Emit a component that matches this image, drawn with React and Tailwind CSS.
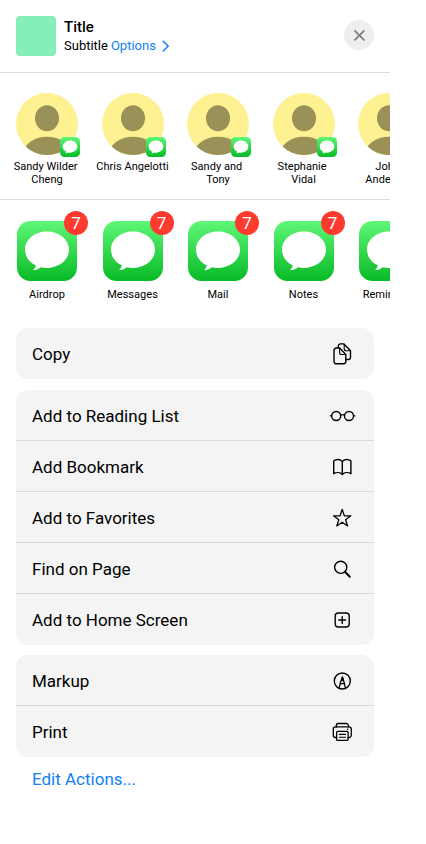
import React from "react";

const people = ["Sandy Wilder \nCheng", "Chris Angelotti", "Sandy and \nTony", "Stephanie \nVidal", "John \nAnderson"];
const apps = ["Airdrop", "Messages", "Mail", "Notes", "Reminders"];

function MessagesIcon({ className, id }) {
  return (
    <svg viewBox="0 0 60 60" className={className} aria-hidden="true">
      <defs>
        <linearGradient id={id} x1="0" y1="0" x2="0" y2="1">
          <stop offset="0" stopColor="#5ff777" />
          <stop offset="1" stopColor="#08ba26" />
        </linearGradient>
      </defs>
      <rect width="60" height="60" rx="13.5" fill={`url(#${id})`} />
      <path
        d="M30 10.4c12.2 0 22 8.1 22 18.2s-9.8 18.3-22 18.3c-2.2 0-4.300-.2-6.200-.7-2.200 1.900-4.900 3-7.900 3.100 1.500-1.300 2.600-3 2.800-5C12 41.200 8 35.300 8 28.600c0-10.100 9.800-18.200 22-18.200z"
        fill="#fff"
      />
    </svg>
  );
}

function Glyph({ children, width = 1.4 }) {
  return (
    <svg
      viewBox="0 0 28 27"
      className="h-[27px] w-7 shrink-0"
      fill="none"
      stroke="#000"
      strokeWidth={width}
      strokeLinecap="round"
      strokeLinejoin="round"
      aria-hidden="true"
    >
      {children}
    </svg>
  );
}

const icons = {
  copy: (
    <Glyph>
      <path d="M10.300 7.700V6.100a2.200 2.200 0 0 1 2.200-2.200h3.400l6.600 6.800v6.600a2.200 2.200 0 0 1-2.200 2.200h-2" />
      <path d="M16.200 4.200v4.500a2 2 0 0 0 2 2h4.200" strokeWidth="1.100" />
      <path d="M11.600 8H8.200A2.200 2.200 0 0 0 6 10.200v11.400a2.200 2.200 0 0 0 2.200 2.200h7.400a2.200 2.200 0 0 0 2.200-2.200v-7.100z" />
      <path d="M11.600 8.200v4.300a2 2 0 0 0 2 2h4" strokeWidth="1.100" />
    </Glyph>
  ),
  glasses: (
    <Glyph>
      <circle cx="8.200" cy="14" r="4.500" />
      <circle cx="21" cy="14" r="4.500" />
      <path d="M12.600 13.200q2-1.100 4 0M3.600 13.600l-1.200.300M25.600 13.600l1.200.300" />
    </Glyph>
  ),
  book: (
    <Glyph>
      <path d="M14.300 8.600C12.600 6 8 5.900 5.700 8.100v12.600c2.700-1.600 6.500-1.400 8.600.7 2.100-2.100 5.900-2.300 8.600-.7V8.100C20.600 5.900 16 6 14.300 8.600zM14.300 8.600v12.800" />
    </Glyph>
  ),
  star: (
    <Glyph>
      <path d="M14.200 5.400l2.100 6.400h6.600l-5.300 4 2 6.200-5.400-3.800L8.800 22l2-6.200-5.300-4h6.600z" strokeWidth="1.300" />
    </Glyph>
  ),
  search: (
    <Glyph>
      <circle cx="12.700" cy="12.300" r="6.100" />
      <path d="M17.200 17l4.600 4.700" strokeWidth="2" />
    </Glyph>
  ),
  plus: (
    <Glyph>
      <rect x="7.200" y="7" width="14" height="14" rx="3" />
      <path d="M14.200 10.600v6.800M10.800 14h6.800" />
    </Glyph>
  ),
  markup: (
    <Glyph>
      <circle cx="14.300" cy="14" r="8" />
      <path d="M11.300 20.700l1-4.700 2-5.600 2 5.600 1 4.700M12.400 16.600h3.800" strokeWidth="1.300" />
      <path d="M14.300 9.800l-1.200 3.800h2.400z" fill="#000" strokeWidth="1" />
    </Glyph>
  ),
  print: (
    <Glyph width={1.3}>
      <path d="M8.300 9V7.700a2.200 2.200 0 0 1 2.200-2.200h7.700a2.200 2.200 0 0 1 2.200 2.200V9" />
      <path d="M8.500 19.500H7.500A2.200 2.200 0 0 1 5.300 17.300V11a2.200 2.200 0 0 1 2.200-2.200h13.600a2.200 2.200 0 0 1 2.200 2.200v6.300a2.200 2.200 0 0 1-2.200 2.200h-1" />
      <rect x="8.600" y="13.300" width="11.500" height="9.100" rx="1.200" />
      <path d="M11.300 16.400h6.200M11.300 19.300h6.200" strokeWidth="1.100" />
      <circle cx="19.700" cy="11.200" r="0.800" fill="#000" stroke="none" />
    </Glyph>
  ),
};

const groups = [
  [["Copy", "copy"]],
  [
    ["Add to Reading List", "glasses"],
    ["Add Bookmark", "book"],
    ["Add to Favorites", "star"],
    ["Find on Page", "search"],
    ["Add to Home Screen", "plus"],
  ],
  [
    ["Markup", "markup"],
    ["Print", "print"],
  ],
];

function Person({ name, index }) {
  return (
    <div className="flex w-[74px] shrink-0 flex-col items-center">
      <div className="relative h-[62px] w-[62px]">
        <svg viewBox="0 0 62 62" className="h-full w-full" aria-hidden="true">
          <clipPath id={`face${index}`}>
            <circle cx="31" cy="31" r="31" />
          </clipPath>
          <g clipPath={`url(#face${index})`}>
            <rect width="62" height="62" fill="#fef191" />
            <ellipse cx="31" cy="25.300" rx="12" ry="13" fill="#999157" />
            <ellipse cx="31" cy="62" rx="24" ry="18.300" fill="#999157" />
          </g>
        </svg>
        <MessagesIcon id={`badge${index}`} className="absolute -right-0.5 -bottom-0.5 h-5 w-5" />
      </div>
      <p className="mt-[5px] text-center text-[11px] leading-[13px] tracking-[0.03px] whitespace-pre">{name}</p>
    </div>
  );
}

function AppItem({ name, index }) {
  return (
    <div className="flex w-[74px] shrink-0 flex-col items-center">
      <div className="relative h-[60px] w-[60px]">
        <MessagesIcon id={`app${index}`} className="h-full w-full" />
        <span className="absolute -top-[10px] -right-[11px] flex h-6 w-6 items-center justify-center rounded-full bg-[#ff3b30] text-[17px] leading-6 text-white">
          7
        </span>
      </div>
      <p className="mt-[7px] text-[11px] leading-[13px] tracking-[0.03px]">{name}</p>
    </div>
  );
}

export default function App() {
  return (
    <div className="min-h-[844px] bg-white font-['Roboto',sans-serif] text-black">
      <main className="w-[390px] overflow-hidden">
        <header className="flex h-[73px] items-start border-b border-[#d9d9d9] px-4 pt-4">
          <div className="h-10 w-10 rounded bg-[#84f0b8]" />
          <div className="ml-2 flex-1">
            <h1 className="pt-px text-[15px] leading-5 font-medium">Title</h1>
            <p className="flex items-center text-[13px] leading-[17px]">
              Subtitle
              <span className="ml-[3px] text-[#0f80f5]">Options</span>
              <svg viewBox="0 0 8 12" className="ml-1.5 h-3 w-2" fill="none" stroke="#0f80f5" strokeWidth="1.500" strokeLinecap="round" strokeLinejoin="round">
                <path d="M1.200 1.200L6.200 6l-5 5" />
              </svg>
            </p>
          </div>
          <button aria-label="Close" className="mt-1 flex h-[30px] w-[30px] items-center justify-center rounded-full bg-[#eeeeee]">
            <svg viewBox="0 0 12 12" className="h-3 w-3" fill="none" stroke="#7c7c7c" strokeWidth="1.700" strokeLinecap="round">
              <path d="M1.900 1.900l9 9M10.900 1.900l-9 9" />
            </svg>
          </button>
        </header>

        <section className="flex h-[127px] gap-[11.5px] border-b border-[#d9d9d9] pt-5 pl-[10px]">
          {people.map((name, i) => (
            <Person key={name} name={name} index={i} />
          ))}
        </section>

        <section className="flex h-32 gap-[11.5px] pt-[21px] pl-[10px]">
          {apps.map((name, i) => (
            <AppItem key={name} name={name} index={i} />
          ))}
        </section>

        <div className="flex flex-col px-4">
          {groups.map((rows, g) => (
            <ul key={g} className="overflow-hidden rounded-xl bg-[#f4f4f4] nth-2:mt-[11px] nth-3:mt-2.5">
              {rows.map(([label, icon], i) => (
                <li
                  key={label}
                  className={`flex h-[51px] items-center justify-between pr-[18px] pl-4 text-[17px] leading-[22px] ${
                    i < rows.length - 1 ? "shadow-[inset_0_-1px_0_#d9d9d9]" : ""
                  }`}
                >
                  <span>{label}</span>
                  {icons[icon]}
                </li>
              ))}
            </ul>
          ))}
        </div>
        <button className="mt-[11px] ml-8 block text-[17px] leading-[22px] text-[#0f80f5]">Edit Actions...</button>
      </main>
    </div>
  );
}
